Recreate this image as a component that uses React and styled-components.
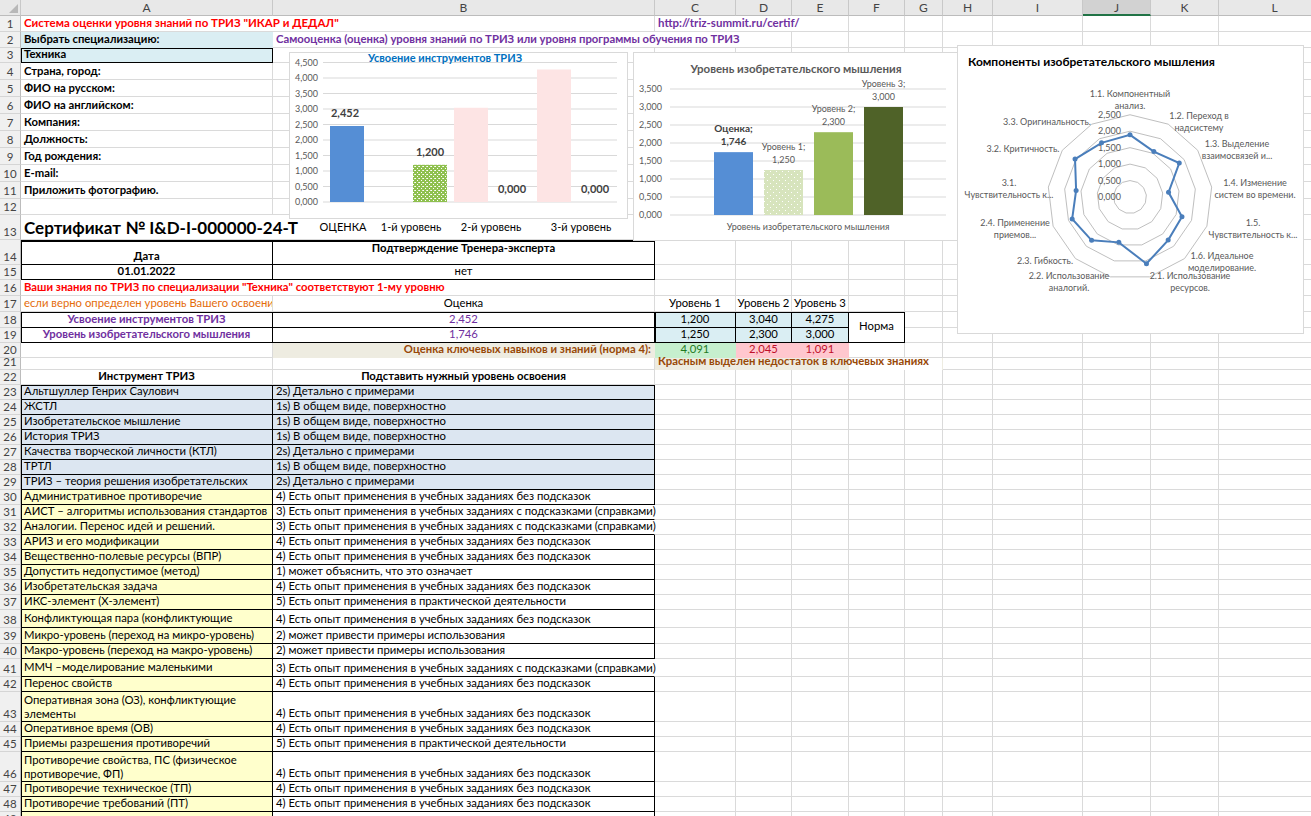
import React from "react";
import styled, { createGlobalStyle } from "styled-components";

const FONT = `Lato, "Liberation Sans", Arial, sans-serif`;
const GRID = "#dadada";
const PURPLE = "#7030a0";
const RED = "#ff0000";
const BROWN = "#984807";
const ORANGE = "#e46c0a";
const SKY = "#daeef3";
const STEEL = "#dce6f1";
const LEMON = "#ffffcc";
const TAN = "#eeece1";

const COLS = [21, 252, 382, 81, 56, 57, 56, 38, 50, 90, 68, 68, 112];
const LETTERS = ["A", "B", "C", "D", "E", "F", "G", "H", "I", "J", "K", "L"];
const HEIGHTS = [
  16, 16, 15, 17, 17, 17, 17, 17, 17, 17, 17, 16,
  25, 25, 15, 16, 16, 16, 15, 15, 12, 15,
  ...Array(15).fill(15),
  18, 16, 15, 18, 15, 30, 15, 15, 30, 15, 15, 15,
];

const GlobalStyle = createGlobalStyle`
  html, body {
    margin: 0;
    padding: 0;
    background: #fff;
    overflow: hidden;
  }
  body {
    font-family: ${FONT};
  }
`;

const Sheet = styled.div`
  position: relative;
  width: 1311px;
  height: 816px;
  overflow: hidden;
  font-family: ${FONT};
`;

const Grid = styled.div`
  display: grid;
  grid-template-columns: ${COLS.map((w) => `${w}px`).join(" ")};
  grid-template-rows: 16px ${HEIGHTS.map((h) => `${h}px`).join(" ")};
`;

const Corner = styled.div`
  box-sizing: border-box;
  display: flex;
  align-items: flex-end;
  justify-content: flex-end;
  padding: 0 2px 2px 0;
  background: #e8e8e8;
  border-right: 1px solid #c8c8c8;
  border-bottom: 1px solid #bcbcbc;
`;

const CornerMark = styled.span`
  width: 0;
  height: 0;
  border-left: 9px solid transparent;
  border-bottom: 9px solid #b8b8b8;
`;

const ColHead = styled.div`
  box-sizing: border-box;
  display: flex;
  align-items: center;
  justify-content: center;
  background: ${(p) => (p.$active ? "#d2d2d2" : "#e8e8e8")};
  border-right: 1px solid #c8c8c8;
  border-bottom: ${(p) => (p.$active ? "2px solid #217346" : "1px solid #bcbcbc")};
  color: #444;
  font-size: 12px;
`;

const RowHead = styled.div`
  box-sizing: border-box;
  display: flex;
  align-items: flex-end;
  justify-content: center;
  padding-bottom: 1px;
  background: #f0f0f0;
  border-right: 1px solid #bcbcbc;
  border-bottom: 1px solid #d5d5d5;
  color: #444;
  font-size: 11.5px;
  line-height: 13px;
  overflow: hidden;
`;

const ALIGN_Y = { top: "flex-start", center: "center", bottom: "flex-end" };
const ALIGN_X = { left: "flex-start", center: "center", right: "flex-end" };

const edge = (p, side) => {
  if (p.$b && p.$b.includes(side)) return "#000";
  if (side === "r" && p.$open) return "transparent";
  if (p.$fill) return "transparent";
  return GRID;
};

const insets = (b = "") => {
  const list = [];
  if (b.includes("T")) list.push("inset 0 2px 0 #000");
  else if (b.includes("t")) list.push("inset 0 1px 0 #000");
  if (b.includes("l")) list.push("inset 1px 0 0 #000");
  return list.length ? list.join(", ") : "none";
};

const Cell = styled.div`
  grid-column: span ${(p) => p.$span || 1};
  grid-row: span ${(p) => p.$rows || 1};
  box-sizing: border-box;
  min-width: 0;
  display: flex;
  align-items: ${(p) => ALIGN_Y[p.$valign || "bottom"]};
  justify-content: ${(p) => ALIGN_X[p.$align || "left"]};
  padding: ${(p) => (p.$valign === "top" ? "1px 3px 0" : "0 3px 1px")};
  background: ${(p) => p.$fill || "transparent"};
  border-right: 1px solid ${(p) => edge(p, "r")};
  border-bottom: 1px solid ${(p) => edge(p, "b")};
  box-shadow: ${(p) => insets(p.$b)};
  color: ${(p) => p.$color || "#000"};
  font-weight: ${(p) => (p.$bold ? 700 : 400)};
  font-size: ${(p) => p.$size || 11.3}px;
  line-height: ${(p) => (p.$size || 11.3) + 3}px;
  white-space: ${(p) => (p.$wrap ? "normal" : "nowrap")};
  overflow: ${(p) => (p.$clip ? "hidden" : "visible")};
`;

const bold = (t, extra = {}) => ({ t, bold: true, ...extra });

const TOP_ROWS = [
  { cells: [
    bold('Система оценки уровня знаний по ТРИЗ "ИКАР и ДЕДАЛ"', { span: 2, color: RED, size: 11.5 }),
    bold("http://triz-summit.ru/certif/", { span: 3, color: PURPLE, size: 11.5 }),
  ] },
  { cells: [
    bold("Выбрать специализацию:", { fill: SKY }),
    bold("Самооценка (оценка) уровня знаний по ТРИЗ или уровня программы обучения по ТРИЗ", { span: 3, color: PURPLE }),
  ] },
  { cells: [bold("Техника", { fill: SKY, b: "tlbr" })] },
  { cells: [bold("Страна, город:")] },
  { cells: [bold("ФИО на русском:")] },
  { cells: [bold("ФИО на английском:")] },
  { cells: [bold("Компания:")] },
  { cells: [bold("Должность:")] },
  { cells: [bold("Год рождения:")] },
  { cells: [bold("E-mail:")] },
  { cells: [bold("Приложить фотографию.")] },
  { cells: [] },
  { cells: [bold("Сертификат № I&D-I-000000-24-T", { span: 2, size: 17 })] },
  { cells: [
    bold("Дата", { align: "center", b: "Tlbr" }),
    bold("Подтверждение Тренера-эксперта", { align: "center", valign: "top", b: "Tbr" }),
  ] },
  { cells: [
    bold("01.01.2022", { align: "center", b: "lbr" }),
    { t: "нет", align: "center", b: "br" },
  ] },
  { cells: [
    bold('Ваши знания по ТРИЗ по специализации "Техника" соответствуют 1-му уровню', { span: 2, color: RED }),
  ] },
  { cells: [
    { t: "если верно определен уровень Вашего освоения ТРИЗ", color: ORANGE, clip: true },
    { t: "Оценка", align: "center" },
    { t: "Уровень 1", align: "center" },
    { t: "Уровень 2", align: "center" },
    { t: "Уровень 3", align: "center" },
  ] },
  { cells: [
    bold("Усвоение инструментов ТРИЗ", { align: "center", color: PURPLE, b: "tlbr" }),
    { t: "2,452", align: "center", color: PURPLE, b: "tbr" },
    { t: "1,200", align: "center", fill: SKY, b: "tlbr" },
    { t: "3,040", align: "center", fill: SKY, b: "tbr" },
    { t: "4,275", align: "center", fill: SKY, b: "tbr" },
    { t: "Норма", align: "center", valign: "center", rows: 2, b: "tbr" },
  ] },
  { taken: 1, cells: [
    bold("Уровень изобретательского мышления", { align: "center", color: PURPLE, b: "lbr" }),
    { t: "1,746", align: "center", color: PURPLE, b: "br" },
    { t: "1,250", align: "center", fill: SKY, b: "lbr" },
    { t: "2,300", align: "center", fill: SKY, b: "br" },
    { t: "3,000", align: "center", fill: SKY, b: "br" },
  ] },
  { cells: [
    { t: "" },
    bold("Оценка ключевых навыков и знаний (норма 4):", { align: "right", color: BROWN, fill: TAN }),
    { t: "4,091", align: "center", color: "#1f7a1f", fill: "#c6efce" },
    { t: "2,045", align: "center", color: "#c0102a", fill: "#ffc7ce" },
    { t: "1,091", align: "center", color: "#c0102a", fill: "#ffc7ce" },
  ] },
  { cells: [
    { t: "" },
    { t: "" },
    bold("Красным выделен недостаток в ключевых знаниях", {
      span: 5,
      color: BROWN,
      fill: `linear-gradient(to right, ${TAN} 0 194px, transparent 194px)`,
    }),
  ] },
  { cells: [
    bold("Инструмент ТРИЗ", { align: "center" }),
    bold("Подставить нужный уровень освоения", { align: "center" }),
  ] },
];

const L1 = "1s) В общем виде, поверхностно";
const L2 = "2s) Детально с примерами";
const P4 = "4) Есть опыт применения в учебных заданиях без подсказок";
const P3 = "3) Есть опыт применения в учебных заданиях с подсказками (справками)";
const P5 = "5) Есть опыт применения в практической деятельности";
const P2 = "2) может привести примеры использования";

const TOOLS = [
  ["Альтшуллер Генрих Саулович", L2],
  ["ЖСТЛ", L1],
  ["Изобретательское мышление", L1],
  ["История ТРИЗ", L1],
  ["Качества творческой личности (КТЛ)", L2],
  ["ТРТЛ", L1],
  ["ТРИЗ – теория решения изобретательских", L2],
  ["Административное противоречие", P4],
  ["АИСТ – алгоритмы использования стандартов", P3],
  ["Аналогии. Перенос идей и решений.", P3],
  ["АРИЗ и его модификации", P4],
  ["Вещественно-полевые ресурсы (ВПР)", P4],
  ["Допустить недопустимое (метод)", "1) может объяснить, что это означает"],
  ["Изобретательская задача", P4],
  ["ИКС-элемент (Х-элемент)", P5],
  ["Конфликтующая пара (конфликтующие", P4, true],
  ["Микро-уровень (переход на микро-уровень)", P2],
  ["Макро-уровень (переход на макро-уровень)", P2],
  ["ММЧ –моделирование маленькими", P3, true],
  ["Перенос свойств", P4],
  ["Оперативная зона (ОЗ), конфликтующие элементы", P4, true],
  ["Оперативное время (ОВ)", P4],
  ["Приемы разрешения противоречий", P5],
  ["Противоречие свойства, ПС (физическое противоречие, ФП)", P4, true],
  ["Противоречие техническое (ТП)", P4],
  ["Противоречие требований (ПТ)", P4],
  ["", ""],
];

const TOOL_ROWS = TOOLS.map(([name, level, top], i) => {
  const first = i === 0 ? "t" : "";
  const early = i < 7;
  return {
    cells: [
      {
        t: name,
        fill: early ? STEEL : LEMON,
        b: `${first}lbr`,
        valign: top ? "top" : "bottom",
        wrap: top,
        clip: true,
      },
      {
        t: level,
        fill: early ? STEEL : undefined,
        b: level === P3 ? `${first}b` : `${first}br`,
        open: level === P3,
      },
    ],
  };
});

const ROWS = [...TOP_ROWS, ...TOOL_ROWS];

const fillRow = (cells, taken = 0) => {
  const used = cells.reduce((n, c) => n + (c.span || 1), 0) + taken;
  const rest = Array.from({ length: Math.max(0, 12 - used) }, () => ({ t: "" }));
  return [...cells, ...rest];
};

const ChartFrame = styled.div`
  position: absolute;
  left: ${(p) => p.$x}px;
  top: ${(p) => p.$y}px;
  width: ${(p) => p.$w}px;
  height: ${(p) => p.$h}px;
  box-sizing: border-box;
  background: ${(p) => (p.$framed ? "#fff" : "transparent")};
  border: ${(p) => (p.$framed ? "1px solid #d9d9d9" : "none")};
`;

const ChartSvg = styled.svg`
  display: block;
  font-family: ${FONT};
  overflow: visible;
`;

const steps = (max) => Array.from({ length: Math.round(max / 0.5) + 1 }, (_, i) => i * 0.5);
const num = (v) => v.toFixed(3).replace(".", ",");

const MasteryChart = () => {
  const base = 150;
  const k = 31;
  const bars = [
    { x: 41, v: 2.452, fill: "#558ed5" },
    { x: 124, v: 1.2, fill: "url(#mesh)" },
    { x: 165, v: 3.04, fill: "#fde4e4" },
    { x: 248, v: 4.275, fill: "#fde4e4" },
  ];
  const labels = [
    { x: 56, y: 65, t: "2,452" },
    { x: 141, y: 104, t: "1,200" },
    { x: 223, y: 141, t: "0,000" },
    { x: 306, y: 141, t: "0,000" },
  ];
  const cats = [
    { x: 54, t: "ОЦЕНКА" },
    { x: 122, t: "1-й уровень" },
    { x: 202, t: "2-й уровень" },
    { x: 292, t: "3-й уровень" },
  ];
  return (
    <ChartFrame $x={289} $y={52} $w={344} $h={189}>
      <ChartSvg width="344" height="189">
        <defs>
          <pattern id="mesh" width="4" height="4" patternUnits="userSpaceOnUse">
            <rect width="4" height="4" fill="#8fc04f" />
            <rect x="0" y="0" width="1" height="1" fill="#fff" />
            <rect x="2" y="2" width="1" height="1" fill="#fff" />
            <rect x="1" y="2" width="1" height="1" fill="#e4f0d4" />
          </pattern>
        </defs>
        <rect x="0.5" y="0.5" width="338" height="166" fill="#fff" stroke="#d9d9d9" />
        {steps(4.5).map((v) => (
          <g key={v}>
            <line x1="34" x2="328" y1={base - k * v} y2={base - k * v} stroke="#d9d9d9" />
            <text x="29" y={base - k * v + 3} textAnchor="end" fontSize="9" fill="#595959">
              {num(v)}
            </text>
          </g>
        ))}
        {bars.map((b) => (
          <rect key={b.x} x={b.x} y={base - k * b.v} width="34" height={k * b.v} fill={b.fill} />
        ))}
        <text x="156" y="10" textAnchor="middle" fontSize="11" fontWeight="700" fill="#0070c0">
          Усвоение инструментов ТРИЗ
        </text>
        {labels.map((l) => (
          <text key={l.x} x={l.x} y={l.y} textAnchor="middle" fontSize="11" fontWeight="700" fill="#404040">
            {l.t}
          </text>
        ))}
        {cats.map((c) => (
          <text key={c.t} x={c.x} y="179" textAnchor="middle" fontSize="11" fill="#000">
            {c.t}
          </text>
        ))}
      </ChartSvg>
    </ChartFrame>
  );
};

const ThinkingChart = () => {
  const base = 162;
  const k = 36;
  const bars = [
    { x: 80, v: 1.746, fill: "#558ed5", name: "Оценка;", strong: true },
    { x: 130, v: 1.25, fill: "url(#dots)", name: "Уровень 1;" },
    { x: 180, v: 2.3, fill: "#9bbb59", name: "Уровень 2;" },
    { x: 230, v: 3.0, fill: "#4f6228", name: "Уровень 3;" },
  ];
  return (
    <ChartFrame $x={633} $y={52} $w={326} $h={189} $framed>
      <ChartSvg width="324" height="187">
        <defs>
          <pattern id="dots" width="6" height="6" patternUnits="userSpaceOnUse">
            <rect width="6" height="6" fill="#d7e4bd" />
            <rect x="1" y="1" width="1" height="1" fill="#fff" />
            <rect x="4" y="4" width="1" height="1" fill="#fff" />
          </pattern>
        </defs>
        <text x="162" y="20" textAnchor="middle" fontSize="11.5" fontWeight="700" fill="#595959">
          Уровень изобретательского мышления
        </text>
        {steps(3.5).map((v) => (
          <g key={v}>
            <line x1="36" x2="312" y1={base - k * v} y2={base - k * v} stroke="#d9d9d9" />
            <text x="28" y={base - k * v + 3} textAnchor="end" fontSize="9" fill="#595959">
              {num(v)}
            </text>
          </g>
        ))}
        {bars.map((b) => {
          const top = base - k * b.v;
          return (
            <g key={b.x}>
              <rect x={b.x} y={top} width="39" height={k * b.v} fill={b.fill} />
              <text
                x={b.x + 19.5}
                y={top - 20}
                textAnchor="middle"
                fontSize={b.strong ? 10 : 9}
                fontWeight={b.strong ? 700 : 400}
                fill={b.strong ? "#404040" : "#595959"}
              >
                <tspan x={b.x + 19.5}>{b.name}</tspan>
                <tspan x={b.x + 19.5} dy="12.5">{num(b.v)}</tspan>
              </text>
            </g>
          );
        })}
        <text x="174" y="177" textAnchor="middle" fontSize="9" fill="#595959">
          Уровень изобретательского мышления
        </text>
      </ChartSvg>
    </ChartFrame>
  );
};

const RADAR_VALUES = [1.89, 1.56, 1.82, 1.18, 1.69, 1.75, 2.09, 1.42, 1.76, 1.88, 1.65, 2.03, 1.86];

const RADAR_LABELS = [
  { x: 172, y: 48, lines: ["1.1. Компонентный", "анализ."] },
  { x: 241, y: 70, lines: ["1.2. Переход в", "надсистему"] },
  { x: 279, y: 98, lines: ["1.3. Выделение", "взаимосвязей и..."] },
  { x: 297, y: 137, lines: ["1.4. Изменение", "систем во времени."] },
  { x: 295, y: 177, lines: ["1.5.", "Чувствительность к..."] },
  { x: 264, y: 210, lines: ["1.6. Идеальное", "моделирование."] },
  { x: 232, y: 230, lines: ["2.1. Использование", "ресурсов."] },
  { x: 111, y: 230, lines: ["2.2. Использование", "аналогий."] },
  { x: 87, y: 215, lines: ["2.3. Гибкость."] },
  { x: 57, y: 177, lines: ["2.4. Применение", "приемов..."] },
  { x: 51, y: 137, lines: ["3.1.", "Чувствительность к..."] },
  { x: 65, y: 103, lines: ["3.2. Критичность."] },
  { x: 89, y: 76, lines: ["3.3. Оригинальность."] },
];

const RadarChart = () => {
  const cx = 172;
  const cy = 151;
  const k = 32.9;
  const n = RADAR_VALUES.length;
  const point = (i, v) => {
    const a = (-90 + (360 / n) * i) * (Math.PI / 180);
    return [cx + k * v * Math.cos(a), cy + k * v * Math.sin(a)];
  };
  const ring = (v) => RADAR_VALUES.map((_, i) => point(i, v).join(",")).join(" ");
  const data = RADAR_VALUES.map((v, i) => point(i, v));
  return (
    <ChartFrame $x={957} $y={45} $w={347} $h={289} $framed>
      <ChartSvg width="345" height="287">
        <text x="10" y="20" fontSize="12" fontWeight="700" fill="#000">
          Компоненты изобретательского мышления
        </text>
        {[0.5, 1, 1.5, 2, 2.5].map((v) => (
          <polygon key={v} points={ring(v)} fill="none" stroke="#bfbfbf" strokeWidth="1" />
        ))}
        {steps(2.5).map((v) => (
          <text key={v} x="163" y={cy - k * v + 3} textAnchor="end" fontSize="9" fill="#595959">
            {num(v)}
          </text>
        ))}
        <polygon points={data.map((p) => p.join(",")).join(" ")} fill="none" stroke="#4a7ebb" strokeWidth="2" />
        {data.map(([x, y], i) => (
          <circle key={i} cx={x} cy={y} r="2.5" fill="#4a7ebb" />
        ))}
        {RADAR_LABELS.map((l) => (
          <text key={l.lines[0]} x={l.x} y={l.y + 3} textAnchor="middle" fontSize="9" fill="#595959">
            {l.lines.map((line, i) => (
              <tspan key={line} x={l.x} dy={i === 0 ? 0 : 11.5}>
                {line}
              </tspan>
            ))}
          </text>
        ))}
      </ChartSvg>
    </ChartFrame>
  );
};

const App = () => (
  <>
    <GlobalStyle />
    <Sheet>
      <Grid>
        <Corner>
          <CornerMark />
        </Corner>
        {LETTERS.map((l) => (
          <ColHead key={l} $active={l === "J"}>
            {l}
          </ColHead>
        ))}
        {ROWS.map((row, i) => (
          <React.Fragment key={i}>
            <RowHead>{i + 1}</RowHead>
            {fillRow(row.cells, row.taken).map((c, j) => (
              <Cell
                key={j}
                $span={c.span}
                $rows={c.rows}
                $bold={c.bold}
                $color={c.color}
                $fill={c.fill}
                $align={c.align}
                $valign={c.valign}
                $b={c.b}
                $open={c.open}
                $wrap={c.wrap}
                $clip={c.clip}
                $size={c.size}
              >
                {c.t}
              </Cell>
            ))}
          </React.Fragment>
        ))}
      </Grid>
      <MasteryChart />
      <ThinkingChart />
      <RadarChart />
    </Sheet>
  </>
);

export default App;
